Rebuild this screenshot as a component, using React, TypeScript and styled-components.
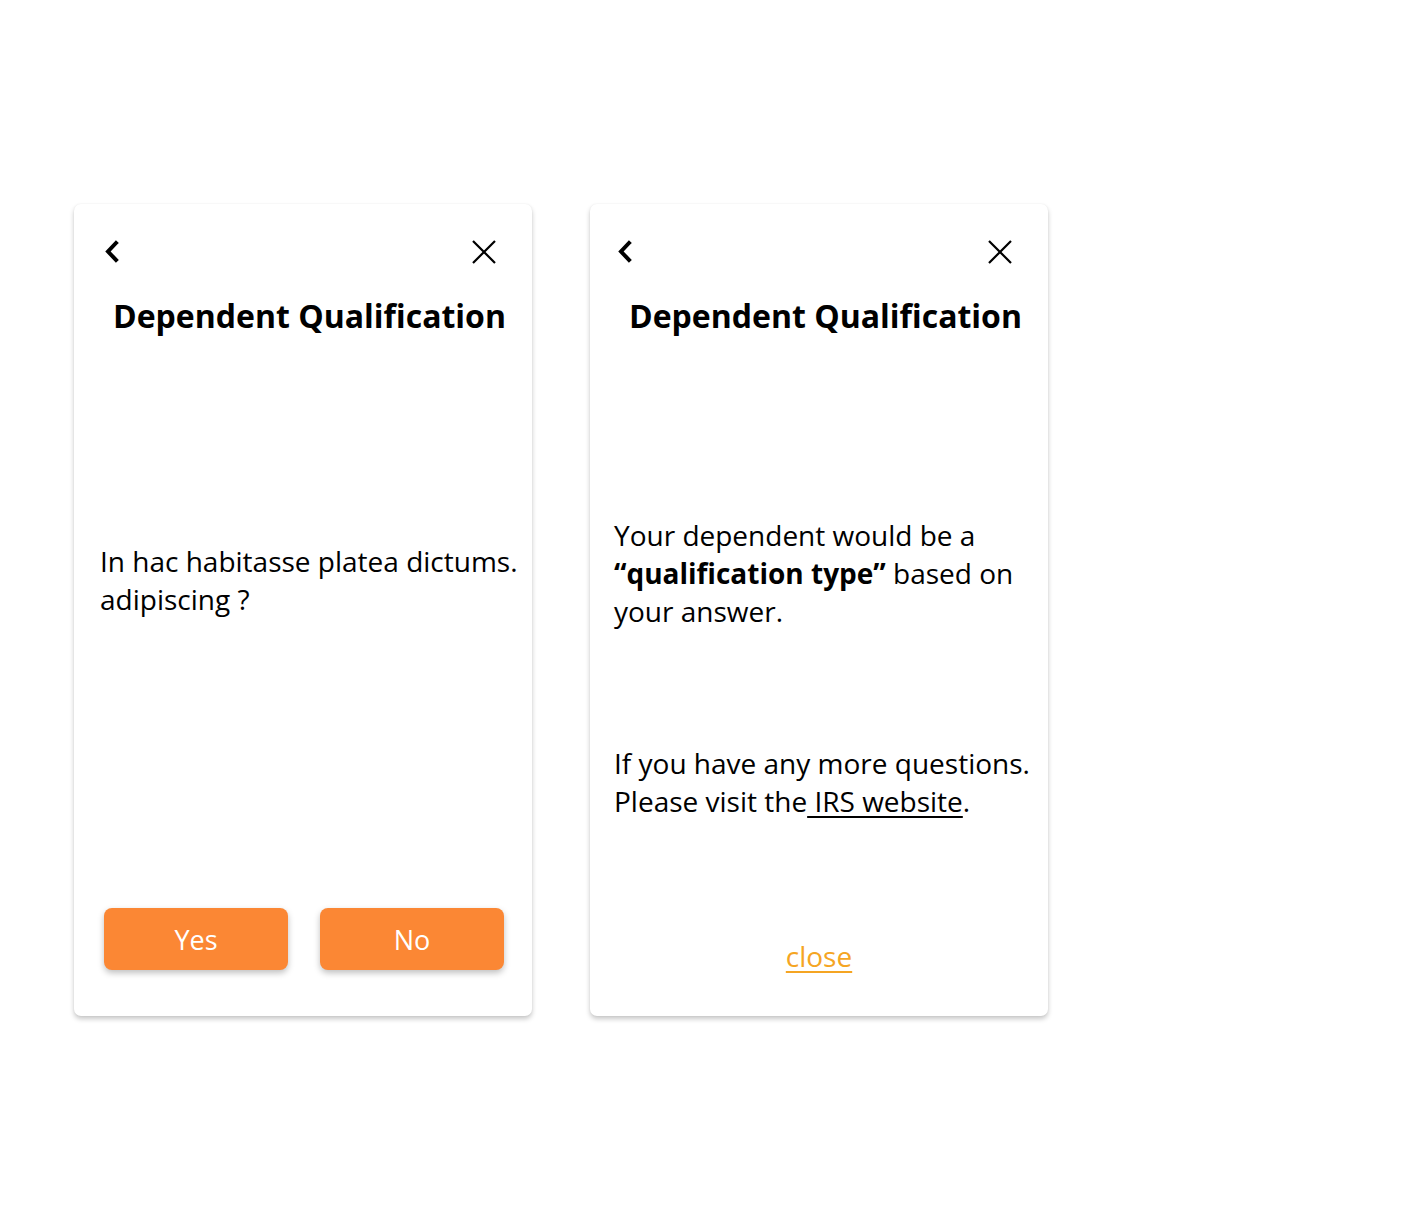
import React from "react";
import styled, { createGlobalStyle } from "styled-components";

// =======================
// styles
// =======================
const GlobalStyle = createGlobalStyle`
  body {
    margin: 0;
    background: #ffffff;
    font-family: "Open Sans", "Liberation Sans", sans-serif;
    color: #000;
  }
`;

const Page = styled.div`
  display: flex;
  align-items: flex-start;
  gap: 58px;
  padding: 204px 0 0 74px;
  width: 1416px;
  height: 1210px;
  box-sizing: border-box;
`;

const Card = styled.div`
  display: flex;
  flex-direction: column;
  width: 458px;
  height: 812px;
  box-sizing: border-box;
  background: #fff;
  border-radius: 7px;
  box-shadow: 0 3px 5px rgba(0, 0, 0, 0.22), 0 0 2px rgba(0, 0, 0, 0.06);
`;

const TopBar = styled.div<{ $left: number }>`
  display: flex;
  justify-content: space-between;
  align-items: center;
  height: 24px;
  padding: 36px 35px 0 ${(p) => p.$left}px;
`;

const IconButton = styled.button`
  display: flex;
  align-items: center;
  justify-content: center;
  padding: 0;
  border: none;
  background: none;
  cursor: pointer;
`;

const Title = styled.h1`
  margin: 30px 0 0 39px;
  font-size: 32px;
  line-height: 44px;
  font-weight: 700;
  white-space: nowrap;
`;

const Text = styled.p<{ $top: number; $left?: number }>`
  margin: ${(p) => p.$top}px 0 0;
  padding: 0 8px 0 ${(p) => p.$left ?? 24}px;
  font-size: 28px;
  line-height: 38px;
  font-weight: 400;
`;

const Link = styled.a`
  color: #000;
  text-decoration: underline;
  text-underline-offset: 4px;
`;

const Buttons = styled.div`
  display: flex;
  gap: 32px;
  margin-top: auto;
  padding: 0 0 46px 30px;
`;

const OrangeButton = styled.button`
  width: 184px;
  height: 62px;
  border: none;
  border-radius: 8px;
  background: #fb8734;
  color: #fff;
  font-family: "Open Sans", "Liberation Sans", sans-serif;
  font-size: 27px;
  box-shadow: 0 3px 6px rgba(0, 0, 0, 0.25);
  cursor: pointer;
`;

const CloseLink = styled.a`
  align-self: center;
  margin-top: auto;
  margin-bottom: 41px;
  font-size: 28px;
  line-height: 38px;
  color: #f5a523;
  text-decoration: underline;
  text-underline-offset: 4px;
  cursor: pointer;
`;

// =======================
// icons
// =======================
const Chevron = () => (
  <svg width="16" height="24" viewBox="0 0 16 24">
    <polyline
      points="12,3 4,11.5 12,20"
      fill="none"
      stroke="#000"
      strokeWidth="4"
      strokeLinecap="square"
    />
  </svg>
);

const Cross = () => (
  <svg width="26" height="26" viewBox="0 0 26 26">
    <path d="M2 2 L24 24 M24 2 L2 24" stroke="#000" strokeWidth="2.2" />
  </svg>
);

const Header: React.FC<{ left: number }> = ({ left }) => (
  <>
    <TopBar $left={left}>
      <IconButton aria-label="back">
        <Chevron />
      </IconButton>
      <IconButton aria-label="close">
        <Cross />
      </IconButton>
    </TopBar>
    <Title>Dependent Qualification</Title>
  </>
);

const App: React.FC = () => {
  return (
    <>
      <GlobalStyle />
      <Page>
        {/* question */}
        <Card>
          <Header left={30} />
          <Text $top={204} $left={26}>
            In hac habitasse platea dictums. adipiscing ?
          </Text>
          <Buttons>
            <OrangeButton>Yes</OrangeButton>
            <OrangeButton>No</OrangeButton>
          </Buttons>
        </Card>

        {/* result */}
        <Card>
          <Header left={27} />
          <Text $top={178}>
            Your dependent would be a <b>“qualification type”</b> based on
            your answer.
          </Text>
          <Text $top={114}>
            If you have any more questions. Please visit the
            <Link href="#"> IRS website</Link>.
          </Text>
          <CloseLink>close</CloseLink>
        </Card>
      </Page>
    </>
  );
};

export default App;
